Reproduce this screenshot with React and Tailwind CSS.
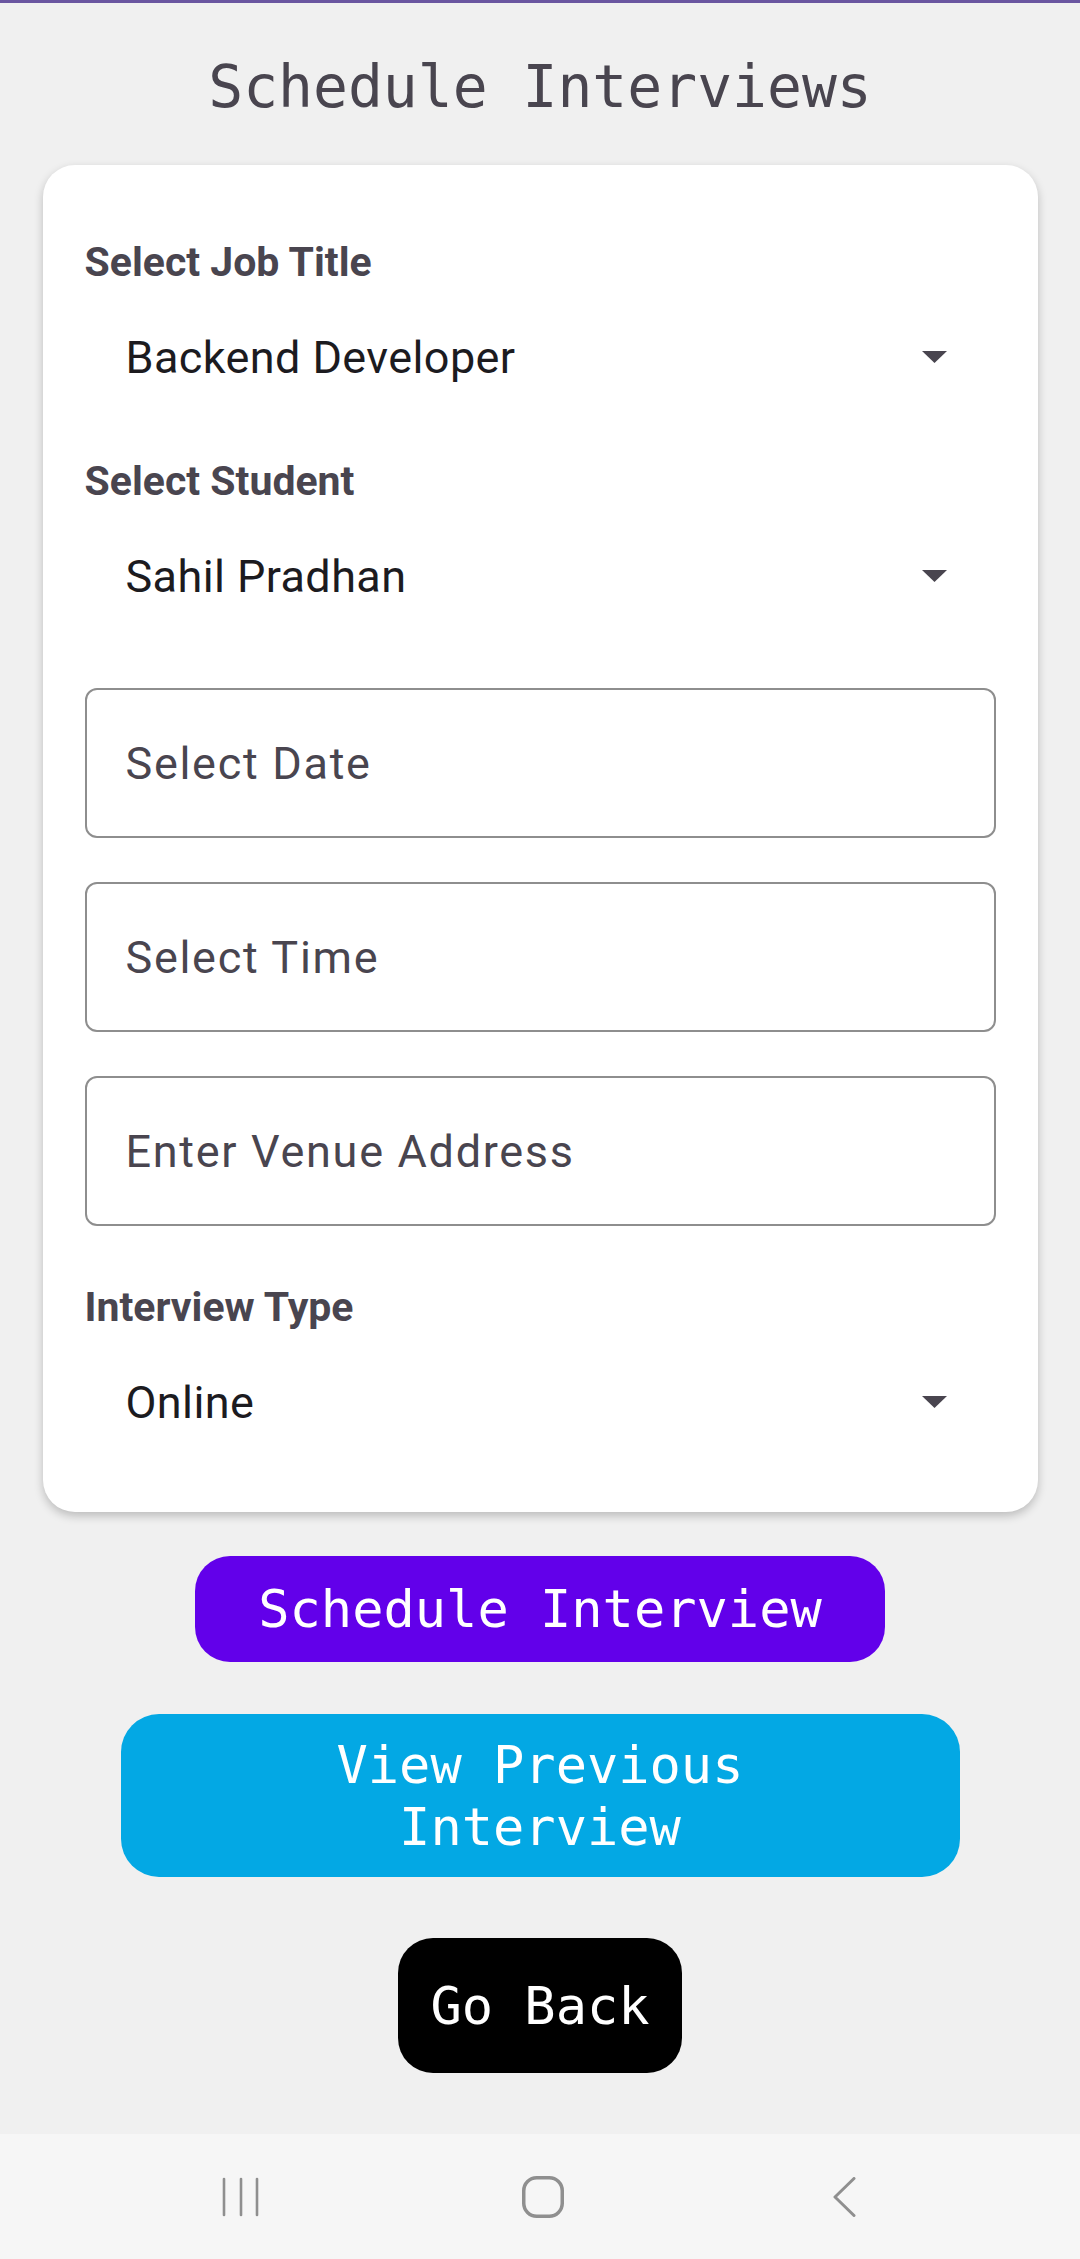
import React from 'react';

const Caret = () => (
  <svg width="25" height="12" viewBox="0 0 25 12" className="shrink-0">
    <polygon points="0,0 25,0 12.5,12" fill="#49454f" />
  </svg>
);

const PickerField = ({ label, value, className = '' }) => (
  <div className={className}>
    <p className="text-[41px] leading-[48px] font-bold text-[#49454f]">{label}</p>
    <div className="h-[142px] flex items-center justify-between pl-[41px] pr-[49px]">
      <span className="text-[45px] leading-[53px] tracking-[0.4px] text-[#1c1b1f]">{value}</span>
      <Caret />
    </div>
  </div>
);

const TextField = ({ placeholder }) => (
  <div className="h-[150px] border-2 border-[#8e8e8e] rounded-[12px] flex items-center pl-[39px]">
    <span className="text-[45px] leading-[53px] tracking-[1.7px] text-[#49454f]">{placeholder}</span>
  </div>
);

const NavBar = () => (
  <div className="h-[125px] bg-[#f6f6f6] flex items-center justify-center pl-[5px]">
    <div className="w-[302px] flex justify-center">
      <svg width="40" height="40" viewBox="0 0 40 40">
        <g stroke="#8f8f8f" strokeWidth="2.6" strokeLinecap="round">
          <line x1="3" y1="2" x2="3" y2="38" />
          <line x1="20" y1="2" x2="20" y2="38" />
          <line x1="36" y1="2" x2="36" y2="38" />
        </g>
      </svg>
    </div>
    <div className="w-[302px] flex justify-center">
      <svg width="42" height="42" viewBox="0 0 42 42">
        <rect x="1.75" y="1.75" width="38.5" height="38.5" rx="13" fill="none" stroke="#8f8f8f" strokeWidth="3.5" />
      </svg>
    </div>
    <div className="w-[302px] flex justify-center">
      <svg width="24" height="40" viewBox="0 0 24 40">
        <polyline points="21,1.5 2,20 21,38.5" fill="none" stroke="#8f8f8f" strokeWidth="3" strokeLinecap="round" strokeLinejoin="round" />
      </svg>
    </div>
  </div>
);

const App = () => (
  <div className="min-h-[2259px] flex flex-col bg-[#f0f0f0] font-['Roboto',sans-serif]">
    <div className="h-[3px] bg-[#6a56a0]" />
    <div className="flex-1 flex flex-col items-center">
      <h1 className="mt-[50px] text-[58px] leading-[68px] text-[#49454f] font-['DejaVu_Sans_Mono',monospace]">
        Schedule Interviews
      </h1>

      <div className="mt-[44px] w-[995px] bg-white rounded-[32px] shadow-[0_4px_10px_rgba(0,0,0,0.22)] px-[42px] pt-[73px] pb-[39px]">
        <PickerField label="Select Job Title" value="Backend Developer" />
        <PickerField label="Select Student" value="Sahil Pradhan" className="mt-[29px]" />
        <div className="mt-[41px] flex flex-col gap-[44px]">
          <TextField placeholder="Select Date" />
          <TextField placeholder="Select Time" />
          <TextField placeholder="Enter Venue Address" />
        </div>
        <PickerField label="Interview Type" value="Online" className="mt-[57px]" />
      </div>

      <div className="flex flex-col items-center font-['DejaVu_Sans_Mono',monospace] text-white text-[52px] leading-[62px]">
        <button className="mt-[44px] h-[106px] px-[63px] rounded-[35px] bg-[#6200ea]">
          Schedule Interview
        </button>
        <button className="mt-[52px] w-[839px] py-[19.5px] rounded-[38px] bg-[#03a8e4] text-center">
          View Previous
          <br />
          Interview
        </button>
        <button className="mt-[61px] h-[135px] px-[32px] rounded-[35px] bg-black">
          Go Back
        </button>
      </div>
    </div>
    <NavBar />
  </div>
);

export default App;
